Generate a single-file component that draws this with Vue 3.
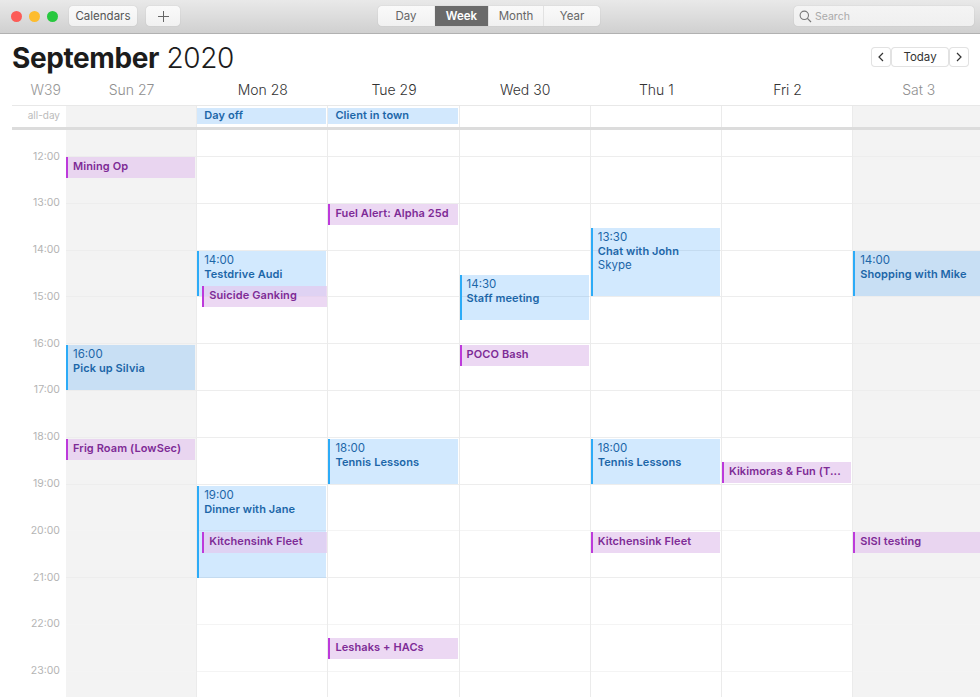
<script setup>
const SLOT = 46.8 // height of an hour row in the grid
const FIRST = 26 // px from grid top to the 12:00 line
const EVENT_HOUR = 46.9
const EVENT_TOP = 27.4

const views = ['Day', 'Week', 'Month', 'Year']
const hours = [12, 13, 14, 15, 16, 17, 18, 19, 20, 21, 22, 23]
const faintHours = [20, 22, 23]

const days = [
  {
    label: 'Sun 27', weekend: true, allDay: null,
    events: [
      { kind: 'task', title: 'Mining Op', start: 12 },
      { kind: 'appt', title: 'Pick up Silvia', start: 16, end: 17, time: '16:00' },
      { kind: 'task', title: 'Frig Roam (LowSec)', start: 18 },
    ],
  },
  {
    label: 'Mon 28', allDay: 'Day off',
    events: [
      { kind: 'appt', title: 'Testdrive Audi', start: 14, end: 15, time: '14:00' },
      { kind: 'task', title: 'Suicide Ganking', start: 14.75, inset: true },
      { kind: 'appt', title: 'Dinner with Jane', start: 19, end: 21, time: '19:00' },
      { kind: 'task', title: 'Kitchensink Fleet', start: 19.98, inset: true },
    ],
  },
  {
    label: 'Tue 29', allDay: 'Client in town',
    events: [
      { kind: 'task', title: 'Fuel Alert: Alpha 25d', start: 13 },
      { kind: 'appt', title: 'Tennis Lessons', start: 18, end: 19, time: '18:00' },
      { kind: 'task', title: 'Leshaks + HACs', start: 22.25 },
    ],
  },
  {
    label: 'Wed 30', allDay: null,
    events: [
      { kind: 'appt', title: 'Staff meeting', start: 14.5, end: 15.5, time: '14:30' },
      { kind: 'task', title: 'POCO Bash', start: 16 },
    ],
  },
  {
    label: 'Thu 1', allDay: null,
    events: [
      { kind: 'appt', title: 'Chat with John', start: 13.5, end: 15, time: '13:30', place: 'Skype' },
      { kind: 'appt', title: 'Tennis Lessons', start: 18, end: 19, time: '18:00' },
      { kind: 'task', title: 'Kitchensink Fleet', start: 19.98 },
    ],
  },
  {
    label: 'Fri 2', allDay: null,
    events: [{ kind: 'task', title: 'Kikimoras & Fun (T...', start: 18.5 }],
  },
  {
    label: 'Sat 3', weekend: true, allDay: null,
    events: [
      { kind: 'appt', title: 'Shopping with Mike', start: 14, end: 15, time: '14:00' },
      { kind: 'task', title: 'SISI testing', start: 19.98 },
    ],
  },
]

function eventStyle(ev) {
  const top = EVENT_TOP + (ev.start - 12) * EVENT_HOUR
  const height = ev.kind === 'task' ? 21 : (ev.end - ev.start) * SLOT - 1.5
  return { top: top + 'px', height: height + 'px' }
}
</script>

<template>
  <div class="app">
    <header class="toolbar">
      <div class="lights">
        <span class="light red"></span>
        <span class="light yellow"></span>
        <span class="light green"></span>
      </div>
      <button class="tool calendars">Calendars</button>
      <button class="tool add">
        <svg width="13" height="13" viewBox="0 0 13 13"><path d="M6.5 1v11M1 6.5h11" stroke="#666" stroke-width="1" fill="none" /></svg>
      </button>
      <div class="segments">
        <button v-for="v in views" :key="v" :class="['segment', v.toLowerCase(), { active: v === 'Week' }]">{{ v }}</button>
      </div>
      <div class="search">
        <svg width="13" height="13" viewBox="0 0 13 13"><circle cx="5.3" cy="5.3" r="4.2" stroke="#777" stroke-width="1.1" fill="none" /><path d="M8.4 8.4l3.6 3.6" stroke="#777" stroke-width="1.2" fill="none" /></svg>
        <span>Search</span>
      </div>
    </header>

    <div class="title-row">
      <h1 class="title"><b>September</b> 2020</h1>
      <div class="nav">
        <button class="nav-btn arrow">
          <svg width="6" height="10" viewBox="0 0 6 10"><path d="M5 1L1 5l4 4" stroke="#333" stroke-width="1.2" fill="none" /></svg>
        </button>
        <button class="nav-btn today">Today</button>
        <button class="nav-btn arrow">
          <svg width="6" height="10" viewBox="0 0 6 10"><path d="M1 1l4 4-4 4" stroke="#333" stroke-width="1.2" fill="none" /></svg>
        </button>
      </div>
    </div>

    <div class="week-row day-names">
      <div class="week-no">W39</div>
      <div v-for="d in days" :key="d.label" :class="['day-name', { muted: d.weekend }]">{{ d.label }}</div>
    </div>

    <div class="week-row all-day">
      <div class="all-day-label">all-day</div>
      <div v-for="d in days" :key="d.label" :class="['all-day-cell', { weekend: d.weekend }]">
        <div v-if="d.allDay" class="all-day-event">{{ d.allDay }}</div>
      </div>
    </div>

    <div class="week-row grid">
      <div class="gutter">
        <div v-for="h in hours" :key="h" class="hour-label">{{ h }}:00</div>
      </div>
      <div v-for="d in days" :key="d.label" :class="['day', { weekend: d.weekend }]">
        <div class="slot first"></div>
        <div v-for="h in hours" :key="h" :class="['slot', { faint: faintHours.includes(h) }]"></div>
        <div
          v-for="ev in d.events"
          :key="ev.title"
          :class="['event', ev.kind, { inset: ev.inset }]"
          :style="eventStyle(ev)"
        >
          <div v-if="ev.time" class="event-time">{{ ev.time }}</div>
          <div class="event-title">{{ ev.title }}</div>
          <div v-if="ev.place" class="event-place">{{ ev.place }}</div>
        </div>
      </div>
    </div>
  </div>
</template>

<style>
html, body {
  margin: 0;
  background: #fff;
}
</style>

<style scoped>
.app {
  width: 980px;
  height: 697px;
  overflow: hidden;
  background: #fff;
  font-family: Inter, "Liberation Sans", sans-serif;
  color: #222;
}

button {
  font-family: inherit;
  padding: 0;
  border: none;
  cursor: default;
}

/* toolbar */
.toolbar {
  display: flex;
  align-items: center;
  height: 34px;
  box-sizing: border-box;
  padding: 0 6px 1px 11px;
  background: linear-gradient(#e9e9e9, #d0d0d0);
  border-bottom: 1px solid #b1b1b1;
}

.lights {
  display: flex;
  gap: 7px;
  margin-right: 11px;
}

.light {
  width: 11px;
  height: 11px;
  border-radius: 50%;
}

.red { background: #fc5c57; }
.yellow { background: #fdbc2e; }
.green { background: #28c83f; }

.tool {
  height: 20px;
  border-radius: 4px;
  background: linear-gradient(#fafafa, #f1f1f1);
  box-shadow: 0 0 1px rgba(0, 0, 0, 0.25);
  font-size: 11.5px;
  color: #555;
}

.calendars {
  width: 68px;
  margin-right: 9px;
}

.add {
  width: 34px;
  display: flex;
  align-items: center;
  justify-content: center;
}

.segments {
  display: flex;
  height: 20px;
  margin-left: 198px;
  border-radius: 4px;
  overflow: hidden;
  box-shadow: 0 0 1px rgba(0, 0, 0, 0.25);
}

.segment {
  background: linear-gradient(#fafafa, #f1f1f1);
  border-right: 1px solid #e2e2e2;
  font-size: 11.5px;
  color: #666;
}

.segment.day { width: 57px; }
.segment.week { width: 54px; }
.segment.month { width: 55px; }
.segment.year { width: 56px; border-right: none; }

.segment.active {
  background: #6a6a6a;
  color: #fff;
  font-weight: 600;
}

.search {
  display: flex;
  align-items: center;
  gap: 3px;
  box-sizing: border-box;
  width: 180px;
  height: 20px;
  margin-left: auto;
  padding-left: 5px;
  border-radius: 4px;
  background: linear-gradient(#f4f4f4, #efefef);
  box-shadow: 0 0 1px rgba(0, 0, 0, 0.25);
  font-size: 10.5px;
  color: #aaa;
}

/* title */
.title-row {
  display: flex;
  align-items: center;
  justify-content: space-between;
  height: 44px;
  padding: 0 12px;
}

.title {
  margin: 4px 0 0;
  font-size: 28px;
  font-weight: 300;
  letter-spacing: -0.4px;
  color: #1c1c1c;
}

.title b {
  font-weight: 700;
}

.nav {
  display: flex;
  gap: 2px;
  margin-top: 2px;
}

.nav-btn {
  display: flex;
  align-items: center;
  justify-content: center;
  height: 18px;
  border-radius: 3px;
  background: #fff;
  box-shadow: 0 0 0 1px #e2e2e2;
  font-size: 11.5px;
  color: #333;
}

.arrow { width: 18px; }
.today { width: 56px; }

/* week grid */
.week-row {
  display: grid;
  grid-template-columns: 66px repeat(7, 131.2px);
}

.day-names {
  height: 27px;
  font-size: 14px;
  font-weight: 300;
  line-height: 24px;
  text-align: center;
  color: #333;
}

.week-no {
  padding-right: 5px;
  text-align: right;
  color: #999;
}

.day-name.muted {
  color: #8f8f8f;
}

.all-day {
  height: 21px;
  margin-left: 12px;
  grid-template-columns: 54px repeat(7, 131.2px);
  border-top: 1px solid #e8e8e8;
  border-bottom: 3px solid #dcdcdc;
}

.all-day-label {
  padding: 3px 6px 0 0;
  font-size: 10px;
  text-align: right;
  color: #bbb;
}

.all-day-cell {
  box-sizing: border-box;
  border-right: 1px solid #ebebeb;
  padding-top: 2px;
}

.all-day-cell.weekend {
  background: #f3f3f3;
}

.all-day-event {
  height: 16px;
  margin-right: 1px;
  padding-left: 7px;
  background: #d2e8fd;
  font-size: 11px;
  font-weight: 600;
  letter-spacing: 0.1px;
  line-height: 15px;
  color: #1c66a8;
}

.grid {
  height: 568px;
}

.gutter {
  padding-top: 19.5px;
}

.hour-label {
  box-sizing: border-box;
  height: 46.8px;
  padding-right: 6px;
  font-size: 10.5px;
  line-height: 14px;
  text-align: right;
  color: #b4b4b4;
}

.day {
  position: relative;
  box-sizing: border-box;
  border-right: 1px solid #ebebeb;
}

.day.weekend {
  background: #f3f3f3;
}

.slot {
  box-sizing: border-box;
  height: 46.8px;
  border-top: 1px solid #ededed;
}

.slot.faint {
  border-top-color: #f4f4f4;
}

.slot.first {
  height: 26px;
  border-top: none;
}

/* events sit on the time axis, so they are placed from their start hour */
.event {
  position: absolute;
  left: 0;
  right: 1px;
  box-sizing: border-box;
  padding-left: 5px;
  padding-top: 2px;
  border-left: 2px solid;
  overflow: hidden;
  white-space: nowrap;
  font-size: 11px;
  letter-spacing: 0.1px;
  line-height: 14px;
}

.event.inset {
  left: 5px;
  right: 0;
}

.event.appt {
  background: rgba(44, 150, 250, 0.21);
  border-left-color: #2cabf7;
  color: #1c66a8;
}

.event.task {
  background: rgba(228, 199, 238, 0.7);
  border-left-color: #bd3adb;
  color: #7e2b96;
}

.event-time {
  font-size: 11.5px;
  letter-spacing: 0;
}

.event-title {
  font-weight: 600;
}

.event-place {
  font-size: 11.5px;
  letter-spacing: 0;
}
</style>
